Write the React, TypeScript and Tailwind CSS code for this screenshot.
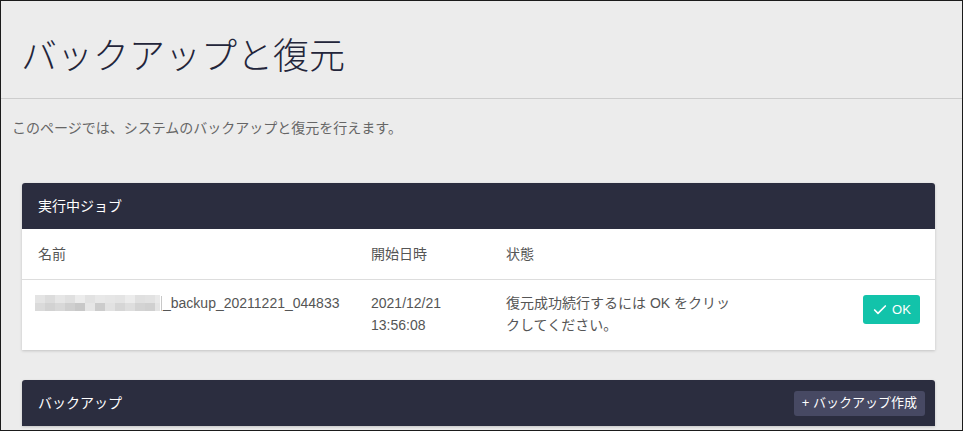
import { Check } from "lucide-react";

const blurRows = [
  ["#e4e4e4", "#dcdcdc", "#e6e6e6", "#e0e0e0", "#ececec", "#e2e2e2", "#e8e8e8", "#e6e6e6", "#e4e4e4", "#ececec", "#e0e0e0", "#e2e2e2", "#e9e9e9"],
  ["#dadada", "#d2d2d2", "#d8d8d8", "#cfcfcf", "#c8c8c8", "#e6e6e6", "#cccccc", "#e2e2e2", "#d6d6d6", "#dedede", "#d3d3d3", "#d0d0d0", "#e4e4e4"],
];

const font = "font-['Segoe_UI','Liberation_Sans','Noto_Sans_CJK_JP',sans-serif]";

function BlurredName() {
  return (
    <span className="inline-flex flex-col align-middle mr-[1px]">
      {blurRows.map((row, i) => (
        <span key={i} className="flex">
          {row.map((c, j) => (
            <span
              key={j}
              className={j === row.length - 1 ? "block w-[5px] h-[8px]" : "block w-[10px] h-[8px]"}
              style={{ backgroundColor: c }}
            />
          ))}
        </span>
      ))}
    </span>
  );
}

export default function App() {
  return (
    <div className={`w-[963px] h-[431px] overflow-hidden border border-[#1b1b1b] bg-[#ececec] ${font}`}>
      <div className="border-b border-[#cdcdcd] pt-[33px] pb-[19px] px-[20px]">
        <h1 className="text-[36px] leading-[45px] font-light text-[#23253a]">
          バックアップと復元
        </h1>
      </div>

      <p className="px-[11px] mt-[19px] text-[14px] leading-[20px] text-[#666]">
        このページでは、システムのバックアップと復元を行えます。
      </p>

      <div className="ml-[21px] w-[913px] mt-[45px] bg-white rounded-t-[3px] shadow-[0_1px_3px_rgba(0,0,0,0.18)]">
        <div className="h-[46px] bg-[#2b2d3f] rounded-t-[3px] px-[16px] flex items-center">
          <span className="text-[14px] text-white">実行中ジョブ</span>
        </div>
        <div className="h-[51px] border-b border-[#dddddd] flex items-center text-[14px] text-[#555]">
          <div className="w-[349px] pl-[16px]">名前</div>
          <div className="w-[135px]">開始日時</div>
          <div className="flex-1">状態</div>
        </div>
        <div className="h-[70px] flex items-start pt-[12px] text-[14px] leading-[22px] text-[#555]">
          <div className="w-[349px] pl-[13px] flex items-center">
            <BlurredName />
            <span className="border-l border-[#c8c8c8] h-[15px] mr-[1px]" />
            <span>_backup_20211221_044833</span>
          </div>
          <div className="w-[135px]">
            <div>2021/12/21</div>
            <div>13:56:08</div>
          </div>
          <div className="w-[232px]">復元成功続行するには OK をクリックしてください。</div>
          <div className="flex-1 flex justify-end pr-[15px] pt-[3px]">
            <button className="h-[29px] w-[57px] rounded-[3px] bg-[#12c3aa] text-white text-[13px] flex items-center justify-center gap-[4px]">
              <Check size={16} strokeWidth={2.5} />
              <span>OK</span>
            </button>
          </div>
        </div>
      </div>

      <div className="ml-[21px] w-[913px] mt-[30px] bg-white rounded-t-[3px] shadow-[0_1px_3px_rgba(0,0,0,0.18)]">
        <div className="h-[46px] bg-[#2b2d3f] rounded-t-[3px] pl-[16px] pr-[10px] flex items-center justify-between">
          <span className="text-[14px] text-white">バックアップ</span>
          <button className="h-[25px] px-[8px] rounded-[3px] bg-[#474963] text-white text-[13px]">
            + バックアップ作成
          </button>
        </div>
      </div>
    </div>
  );
}
